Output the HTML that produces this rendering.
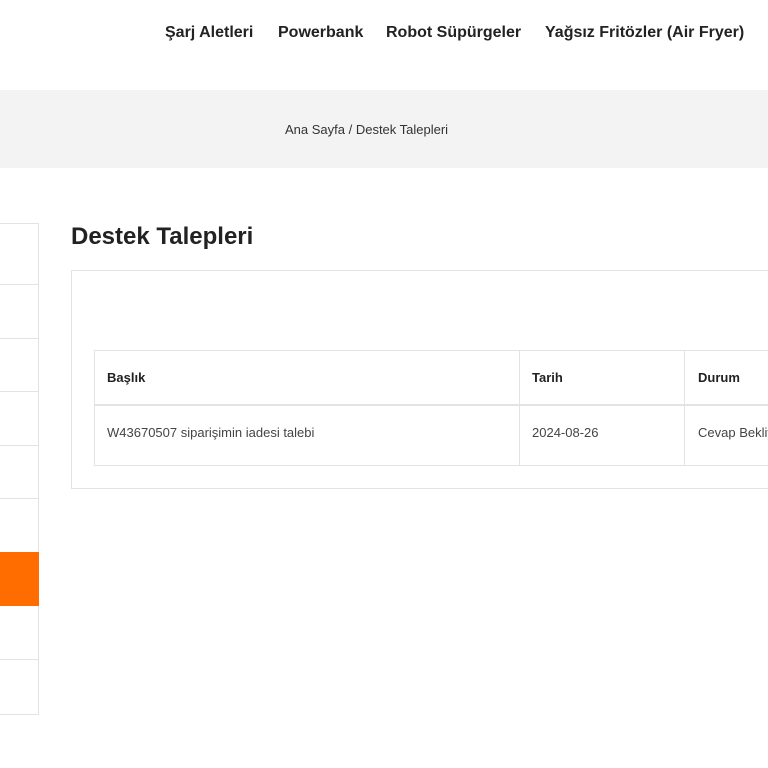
<!DOCTYPE html>
<html><head><style>
body{margin:0;width:768px;height:768px;overflow:hidden;background:#fff;font-family:"Liberation Sans",sans-serif;color:#222;position:relative}
.a{position:absolute}
.nav{top:24px;font-weight:bold;font-size:16px;color:#222;white-space:nowrap}
</style></head><body>
<div class="a nav" style="left:165px">Şarj Aletleri</div>
<div class="a nav" style="left:278px">Powerbank</div>
<div class="a nav" style="left:386px">Robot Süpürgeler</div>
<div class="a nav" style="left:545px">Yağsız Fritözler (Air Fryer)</div>
<div class="a" style="left:0;top:90px;width:768px;height:78px;background:#f3f3f3"></div>
<div class="a" style="left:285px;top:122px;font-size:13px;color:#333">Ana Sayfa / Destek Talepleri</div>
<div class="a" style="left:-1px;top:223px;width:39px;height:490px;border:1px solid #e3e3e3;border-left:none"></div>
<div class="a" style="left:0;top:284px;width:38px;border-top:1px solid #e3e3e3"></div>
<div class="a" style="left:0;top:338px;width:38px;border-top:1px solid #e3e3e3"></div>
<div class="a" style="left:0;top:391px;width:38px;border-top:1px solid #e3e3e3"></div>
<div class="a" style="left:0;top:445px;width:38px;border-top:1px solid #e3e3e3"></div>
<div class="a" style="left:0;top:498px;width:38px;border-top:1px solid #e3e3e3"></div>
<div class="a" style="left:0;top:552px;width:39px;height:54px;background:#ff6d00"></div>
<div class="a" style="left:0;top:659px;width:38px;border-top:1px solid #e3e3e3"></div>
<div class="a" style="left:71px;top:223px;font-size:24px;font-weight:bold;color:#222">Destek Talepleri</div>
<div class="a" style="left:71px;top:270px;width:720px;height:217px;border:1px solid #e3e3e3"></div>
<div class="a" style="left:94px;top:350px;width:700px;height:114px;border:1px solid #e3e3e3"></div>
<div class="a" style="left:94px;top:404px;width:700px;border-top:2px solid #e3e3e3"></div>
<div class="a" style="left:519px;top:350px;height:115px;border-left:1px solid #e3e3e3"></div>
<div class="a" style="left:684px;top:350px;height:115px;border-left:1px solid #e3e3e3"></div>
<div class="a" style="left:107px;top:370px;font-size:13px;font-weight:bold">Başlık</div>
<div class="a" style="left:532px;top:370px;font-size:13px;font-weight:bold">Tarih</div>
<div class="a" style="left:698px;top:370px;font-size:13px;font-weight:bold">Durum</div>
<div class="a" style="left:107px;top:425px;font-size:13px;color:#444">W43670507 siparişimin iadesi talebi</div>
<div class="a" style="left:532px;top:425px;font-size:13px;color:#444">2024-08-26</div>
<div class="a" style="left:698px;top:425px;font-size:13px;color:#444;white-space:nowrap">Cevap Bekliyor</div>
</body></html>
